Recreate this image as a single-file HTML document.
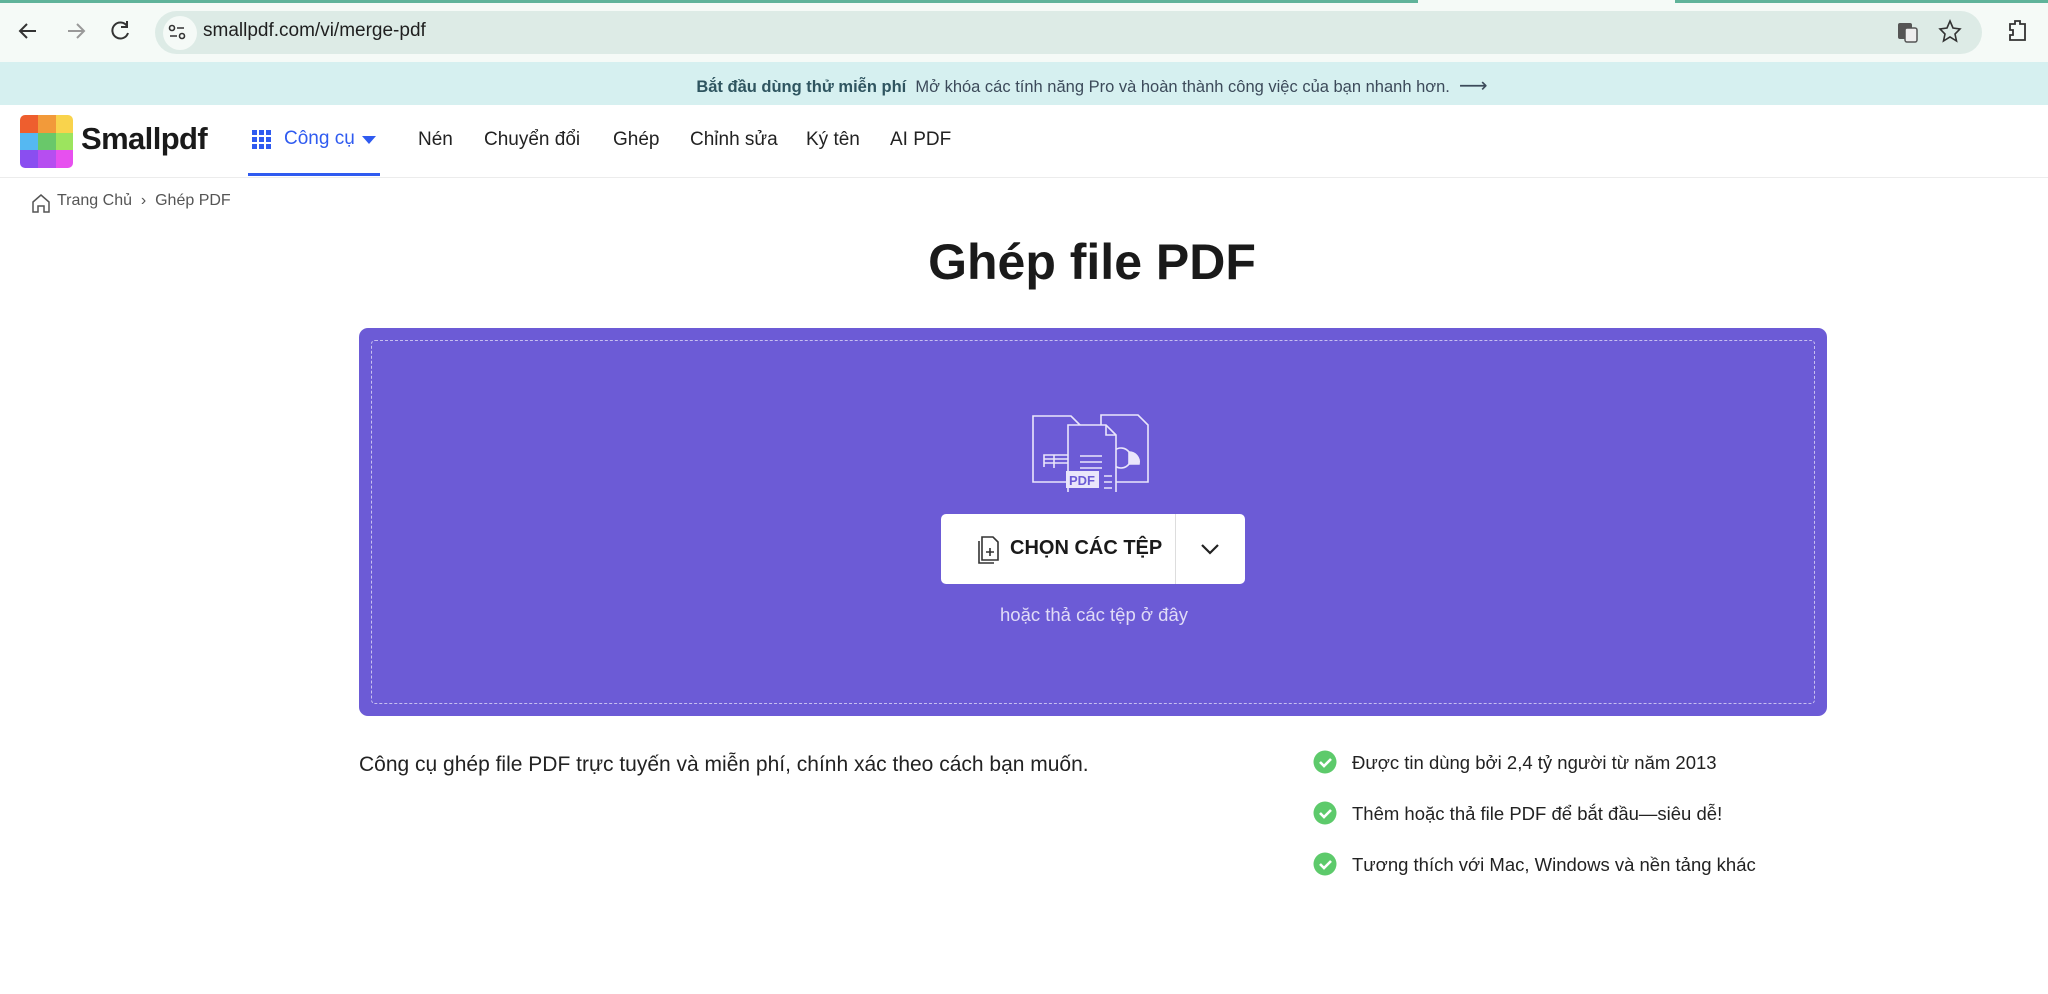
<!DOCTYPE html>
<html><head><meta charset="utf-8"><style>
*{margin:0;padding:0;box-sizing:border-box}
body{width:2048px;height:994px;overflow:hidden;background:#fff;font-family:"Liberation Sans","DejaVu Sans",sans-serif;color:#1f1f1f;position:relative}
.a{position:absolute;white-space:nowrap}
</style></head><body>
<div class="a" style="left:0;top:0;width:2048px;height:62px;background:#f5faf7"></div>
<div class="a" style="left:0;top:0;width:1418px;height:3px;background:#5fb39a"></div>
<div class="a" style="left:1675px;top:0;width:373px;height:3px;background:#5fb39a"></div>
<div class="a" style="left:155px;top:11px;width:1827px;height:43px;border-radius:22px;background:#ddebe6"></div>
<div class="a" style="left:163px;top:16px;width:34px;height:34px;border-radius:17px;background:#f5faf7"></div>
<svg class="a" style="left:0;top:0" width="2048" height="62" fill="none" stroke="#333" stroke-width="2">
<path d="M36 31H20M27 24l-7 7 7 7"/>
<path d="M68 31h16M77 24l7 7-7 7" stroke="#999"/>
<path d="M127 26a8 8 0 1 0 1 7M127 21v6h-6"/>
<circle cx="172" cy="28" r="2.5" stroke-width="1.6"/><path d="M177 28h7M170 36h7" stroke-width="1.6"/><circle cx="182" cy="36" r="2.5" stroke-width="1.6"/>
<rect x="1898" y="23" width="14" height="16" rx="2" fill="#555" stroke="none"/><rect x="1905" y="28" width="12" height="14" rx="2" fill="#eee" stroke="#555" stroke-width="1.5"/>
<path d="M1950 21l3 7 7 1-5 5 1.5 7-6.5-4-6.5 4 1.5-7-5-5 7-1z" stroke-width="1.6"/>
<path d="M2010 24h5v-3h5v3h5v16h-15v-5h3v-5h-3z" stroke-width="1.8"/>
</svg>
<div class="a" style="top:20px;font-size:19px;color:#1f1f1f;left:203px">smallpdf.com/vi/merge-pdf</div>
<div class="a" style="left:0;top:62px;width:2048px;height:43px;background:#d6f0f0"></div>
<div class="a" style="left:0;top:73px;width:2184px;text-align:center;font-size:16.5px;color:#3c4a5a"><b style="color:#2f5560">Bắt đầu dùng thử miễn phí</b>&nbsp; Mở khóa các tính năng Pro và hoàn thành công việc của bạn nhanh hơn. &nbsp;<span style="font-size:20px">⟶</span></div>
<div class="a" style="left:0;top:177px;width:2048px;height:1px;background:#ececec"></div>
<svg class="a" style="left:20px;top:115px" width="53" height="53"><defs><clipPath id="c"><rect width="53" height="53" rx="5"/></clipPath></defs><g clip-path="url(#c)">
<rect x="0" y="0" width="18" height="18" fill="#ee5e2e"/><rect x="18" y="0" width="18" height="18" fill="#f29a3a"/><rect x="36" y="0" width="17" height="18" fill="#f9d34c"/>
<rect x="0" y="18" width="18" height="17" fill="#55b8f2"/><rect x="18" y="18" width="18" height="17" fill="#69c86a"/><rect x="36" y="18" width="17" height="17" fill="#9ce45e"/>
<rect x="0" y="35" width="18" height="18" fill="#8a4ef0"/><rect x="18" y="35" width="18" height="18" fill="#b64ef0"/><rect x="36" y="35" width="17" height="18" fill="#e750ef"/></g></svg>
<div class="a" style="left:81px;top:121px;font-size:31px;font-weight:bold;letter-spacing:-0.6px;color:#1a1a1a">Smallpdf</div>
<svg class="a" style="left:252px;top:130px" width="20" height="20" fill="#2f5bf0"><rect x="0" y="0" width="5" height="5"/><rect x="7" y="0" width="5" height="5"/><rect x="14" y="0" width="5" height="5"/><rect x="0" y="7" width="5" height="5"/><rect x="7" y="7" width="5" height="5"/><rect x="14" y="7" width="5" height="5"/><rect x="0" y="14" width="5" height="5"/><rect x="7" y="14" width="5" height="5"/><rect x="14" y="14" width="5" height="5"/></svg>
<div class="a" style="left:284px;top:128px;font-size:19px;color:#2f5bf0">Công cụ</div>
<svg class="a" style="left:362px;top:136px" width="14" height="9"><path d="M0 0h14L7 8z" fill="#2f5bf0"/></svg>
<div class="a" style="left:248px;top:173px;width:132px;height:3px;background:#2f5bf0"></div>
<div class="a" style="left:418px;top:129px;font-size:19px;color:#222">Nén</div>
<div class="a" style="left:484px;top:129px;font-size:19px;color:#222">Chuyển đổi</div>
<div class="a" style="left:613px;top:129px;font-size:19px;color:#222">Ghép</div>
<div class="a" style="left:690px;top:129px;font-size:19px;color:#222">Chỉnh sửa</div>
<div class="a" style="left:806px;top:129px;font-size:19px;color:#222">Ký tên</div>
<div class="a" style="left:890px;top:129px;font-size:19px;color:#222">AI PDF</div>
<svg class="a" style="left:31px;top:193px" width="20" height="20" fill="none" stroke="#555" stroke-width="1.5"><path d="M2 9L10 2l8 7v10h-5v-6H7v6H2z"/></svg>
<div class="a" style="left:57px;top:192px;font-size:16px;color:#555">Trang Chủ &nbsp;›&nbsp; Ghép PDF</div>
<div class="a" style="left:0;top:233px;width:2184px;text-align:center;font-size:50px;font-weight:bold;color:#1a1a1a">Ghép file PDF</div>
<div class="a" style="left:359px;top:328px;width:1468px;height:388px;border-radius:9px;background:#6c5bd6"></div>
<div class="a" style="left:371px;top:340px;width:1444px;height:364px;border:1px dashed #c7bff0;border-radius:4px"></div>
<svg class="a" style="left:1030px;top:412px" width="130" height="80" fill="none" stroke="#eae6fb" stroke-width="1.6">
<path d="M3 4h38l10 10v56H3z" fill="#6c5bd6"/><path d="M14 55V43h30M14 47h30M14 51h30M24 43v13"/>
<path d="M71 3h37l10 10v57H71z" fill="#6c5bd6"/><path d="M99 40a10 10 0 1 0 0 12" /><path d="M99 40v12h10a10 10 0 0 0-10-12z" fill="#eae6fb"/>
<path d="M38 13h38l10 10v64H38z" fill="#6c5bd6"/><path d="M76 13v10h10M50 44h22M50 50h22M50 56h22M74 64h8M74 70h8M74 76h8"/>
<rect x="36" y="59" width="33" height="17" fill="#eae6fb" stroke="none"/>
<text x="39" y="73" font-size="13" font-weight="bold" fill="#6c5bd6" stroke="none" font-family="Liberation Sans">PDF</text>
</svg>
<div class="a" style="left:941px;top:514px;width:304px;height:70px;background:#fff;border-radius:5px"></div>
<div class="a" style="left:1175px;top:514px;width:1px;height:70px;background:#ddd"></div>
<svg class="a" style="left:976px;top:535px" width="24" height="30" fill="none" stroke="#333" stroke-width="1.6"><path d="M3 6v22h15"/><path d="M6 2h11l5 5v18H6z" fill="#fff"/><path d="M14 13v8M10 17h8"/></svg>
<div class="a" style="left:1010px;top:537px;font-size:20px;font-weight:bold;color:#1a1a1a">CHỌN CÁC TỆP</div>
<svg class="a" style="left:1200px;top:542px" width="20" height="14" fill="none" stroke="#222" stroke-width="2.2"><path d="M2 3l8 8 8-8"/></svg>
<div class="a" style="left:0;top:604px;width:2188px;text-align:center;font-size:18.5px;color:#e0dbf7">hoặc thả các tệp ở đây</div>
<div class="a" style="left:359px;top:753px;font-size:21px;color:#222">Công cụ ghép file PDF trực tuyến và miễn phí, chính xác theo cách bạn muốn.</div>
<svg class="a" style="left:1313px;top:750px" width="26" height="130"><g fill="#5dca6b"><circle cx="12" cy="12" r="11.5"/><circle cx="12" cy="63" r="11.5"/><circle cx="12" cy="114" r="11.5"/></g><g fill="none" stroke="#fff" stroke-width="2.6"><path d="M7 12l4 4 7-7M7 63l4 4 7-7M7 114l4 4 7-7"/></g></svg>
<div class="a" style="left:1352px;top:752px;font-size:18.5px;color:#222">Được tin dùng bởi 2,4 tỷ người từ năm 2013</div>
<div class="a" style="left:1352px;top:803px;font-size:18.5px;color:#222">Thêm hoặc thả file PDF để bắt đầu—siêu dễ!</div>
<div class="a" style="left:1352px;top:854px;font-size:18.5px;color:#222">Tương thích với Mac, Windows và nền tảng khác</div>
</body></html>
